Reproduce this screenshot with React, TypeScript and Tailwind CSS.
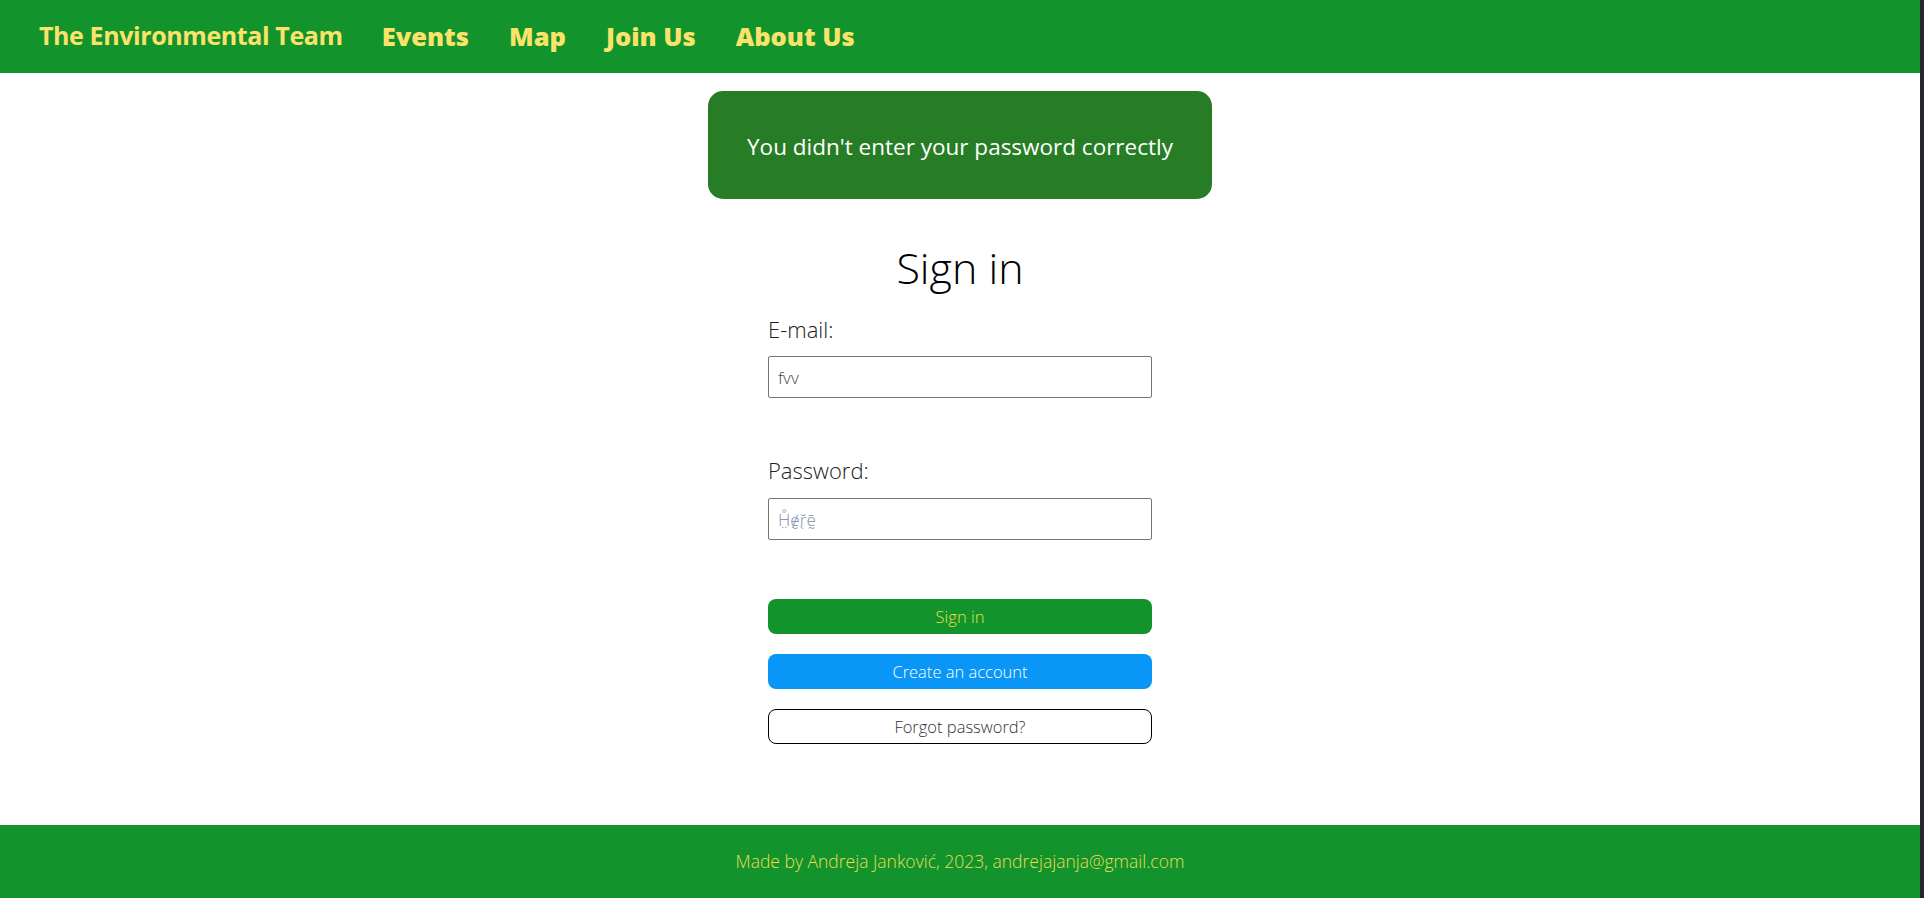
import React from "react";

export default function App() {
  return (
    <div className="flex w-[1924px] min-h-[898px] bg-white" style={{ fontFamily: '"Open Sans", "Noto Sans", sans-serif' }}>
      <div className="flex w-[1920px] min-h-[898px] flex-col">
        <header className="flex h-[73px] items-center bg-[#13932b] pl-[39px] text-[#fbe36b]">
          <span className="mb-[3px] text-[25px] font-bold leading-none tracking-[-0.4px]">The Environmental Team</span>
          <nav className="ml-[39px] flex items-center gap-[40px] text-[25.5px] font-extrabold leading-none">
            <a>Events</a>
            <a>Map</a>
            <a>Join Us</a>
            <a>About Us</a>
          </nav>
        </header>

        <main className="flex flex-1 flex-col items-center">
          <div className="mt-[18px] flex h-[108px] w-[504px] items-center justify-center rounded-[15px] bg-[#267d25] pt-[4px] text-[22.5px] text-white">
            You didn't enter your password correctly
          </div>

          <h1 className="mt-[41px] text-[43px] font-light leading-[56px] text-black">Sign in</h1>

          <form className="flex w-[384px] flex-col" onSubmit={(e) => e.preventDefault()}>
            <label className="mt-[18px] text-[22px] font-light leading-[30px] text-[#222]">E-mail:</label>
            <input
              defaultValue="fvv"
              className="mt-[12px] h-[42px] w-full rounded-[2px] border border-[#767676] px-[9px] text-[17px] font-light text-[#444] outline-none"
            />
            <label className="mt-[57px] text-[22px] font-light leading-[30px] text-[#222]">Password:</label>
            <input
              type="text"
              placeholder="H̤̊e̸̮r̖̆ḛ̄"
              className="mt-[13px] h-[42px] w-full rounded-[2px] border border-[#767676] px-[9px] text-[17px] font-light text-[#444] outline-none placeholder:text-[#8a9bb0]"
            />
            <button className="mt-[59px] h-[35px] w-full rounded-[8px] bg-[#13932b] pt-[1px] text-[16.5px] font-light text-[#e8e04a]">
              Sign in
            </button>
            <button className="mt-[20px] h-[35px] w-full rounded-[8px] bg-[#0996f6] pt-[1px] text-[16.5px] font-light text-white">
              Create an account
            </button>
            <button className="mt-[20px] h-[35px] w-full rounded-[8px] border-[1.5px] border-black bg-white pt-[1px] text-[16.5px] font-light text-[#333]">
              Forgot password?
            </button>
          </form>
        </main>

        <footer className="flex h-[73px] items-center justify-center bg-[#13932b] text-[17.5px] font-light text-[#e8dd55]">
          Made by Andreja Janković, 2023, andrejajanja@gmail.com
        </footer>
      </div>
      <div className="w-[4px] bg-[#23262d]" />
    </div>
  );
}
